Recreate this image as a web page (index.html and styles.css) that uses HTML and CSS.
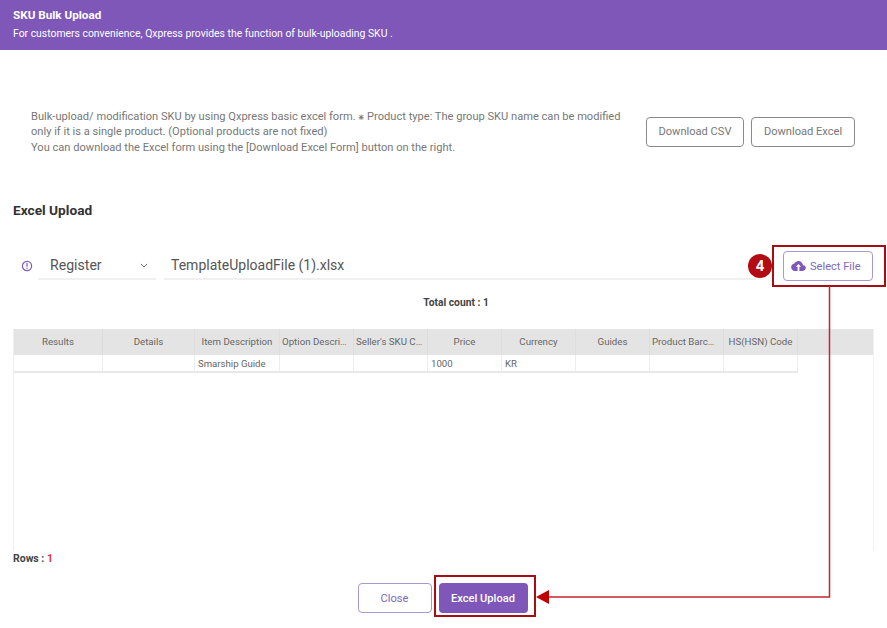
FILE: index.html
```html
<!DOCTYPE html>
<html lang="en">
<head>
<meta charset="utf-8">
<title>SKU Bulk Upload</title>
<link rel="stylesheet" href="styles.css">
</head>
<body>
<div class="page">
  <header class="banner">
    <h1 class="banner-title">SKU Bulk Upload</h1>
    <p class="banner-sub">For customers convenience, Qxpress provides the function of bulk-uploading SKU .</p>
  </header>

  <section class="intro">
    <p class="intro-text">Bulk-upload/ modification SKU by using Qxpress basic excel form. ⁕ Product type: The group SKU name can be modified only if it is a single product. (Optional products are not fixed)<br>You can download the Excel form using the [Download Excel Form] button on the right.</p>
    <div class="intro-actions">
      <button class="btn btn-grey btn-csv">Download CSV</button>
      <button class="btn btn-grey btn-excel">Download Excel</button>
    </div>
  </section>

  <h2 class="section-title">Excel Upload</h2>

  <div class="form-row">
    <svg class="info-icon" viewBox="0 0 12 12" width="12" height="12"><circle cx="6" cy="6" r="4.6" fill="none" stroke="#7e57b9" stroke-width="1.2"/><rect x="5.4" y="3" width="1.2" height="3.7" fill="#7e57b9"/><rect x="5.4" y="7.7" width="1.2" height="1.2" fill="#7e57b9"/></svg>
    <div class="select">
      <span>Register</span>
      <svg viewBox="0 0 10 6" width="8" height="5"><path d="M1 1l4 4 4-4" fill="none" stroke="#666" stroke-width="1.2"/></svg>
    </div>
    <div class="file-name">TemplateUploadFile (1).xlsx</div>
    <button class="btn btn-purple-line btn-select">
      <svg viewBox="0 0 24 18" width="15" height="11"><path d="M19.3 6.8C18.6 3 15.6.2 12 .2 9.100.2 6.600 1.800 5.300 4.200 2.300 4.600 0 7.100 0 10.200c0 3.300 2.700 6 6 6h13c2.800 0 5-2.200 5-5 0-2.600-2-4.700-4.700-4.400z" fill="#7e57b9"/><path d="M12 4.800l4.300 4.500h-2.800v6.900h-3V9.300H7.700z" fill="#fff"/></svg>
      Select File
    </button>
  </div>

  <div class="total">Total count : 1</div>

  <div class="grid">
    <div class="grid-head">
      <div class="col c1 center">Results</div>
      <div class="col c2 center">Details</div>
      <div class="col c3 center">Item Description</div>
      <div class="col c4">Option Descri…</div>
      <div class="col c4">Seller's SKU C…</div>
      <div class="col c4 center">Price</div>
      <div class="col c4 center">Currency</div>
      <div class="col c4 center">Guides</div>
      <div class="col c4">Product Barc…</div>
      <div class="col c4 center">HS(HSN) Code</div>
    </div>
    <div class="grid-row">
      <div class="col c1"></div>
      <div class="col c2"></div>
      <div class="col c3">Smarship Guide</div>
      <div class="col c4"></div>
      <div class="col c4"></div>
      <div class="col c4">1000</div>
      <div class="col c4">KR</div>
      <div class="col c4"></div>
      <div class="col c4"></div>
      <div class="col c4"></div>
    </div>
  </div>

  <div class="rows">Rows : <span class="rows-num">1</span></div>

  <div class="footer-actions">
    <button class="btn btn-purple-line btn-close">Close</button>
    <button class="btn btn-primary">Excel Upload</button>
  </div>

  <div class="mark mark-select"></div>
  <div class="badge">4</div>
  <div class="mark mark-upload"></div>
  <svg class="connector" width="887" height="628" viewBox="0 0 887 628"><path d="M829.500 286V597H548" fill="none" stroke="#c8242b" stroke-width="1.5"/><path d="M536 597l13-7v14z" fill="#c00000"/></svg>
</div>
</body>
</html>
```
FILE: styles.css
```css
* { box-sizing: border-box; }
html, body { margin: 0; padding: 0; background: #fff; }
body { font-family: Roboto, "Liberation Sans", sans-serif; color: #444; }
.page { position: relative; width: 887px; height: 628px; overflow: hidden; }

.banner { height: 50px; background: #7e57b9; color: #fff; padding: 8px 13px 0; }
.banner-title { margin: 0; font-size: 11.7px; line-height: 14px; font-weight: 700; }
.banner-sub { margin: 5px 0 0; font-size: 10.4px; line-height: 14px; font-weight: 400; }

.intro { display: flex; align-items: center; padding: 58.5px 32px 0 31px; }
.intro-text { flex: none; margin: 0; width: 600px; font-size: 11.1px; line-height: 15.5px; color: #777; }
.intro-actions { display: flex; gap: 7px; margin-left: 15px; }

.btn { height: 30px; padding: 0; border-radius: 4px; font-family: inherit; font-size: 11.1px; background: #fff; cursor: pointer; }
.btn-grey { border: 1px solid #8a8a8a; color: #777; }
.btn-csv { width: 98px; }
.btn-excel { width: 104px; }
.btn-purple-line { border: 1px solid #a897d2; color: #8068bb; }
.btn-primary { width: 89px; border: 0; background: #7e57b9; color: #fff; font-weight: 500; }

.section-title { margin: 45px 0 0 13px; font-size: 13.7px; line-height: 20px; font-weight: 700; color: #333; }

.form-row { display: flex; align-items: center; height: 30px; margin-top: 31px; padding-left: 21px; }
.info-icon { flex: none; }
.select { display: flex; align-items: center; justify-content: space-between; width: 118px; height: 28px; margin: 0 0 0 5px; padding: 0 8px 0 12px; border-bottom: 2px solid #f0f0f0; font-size: 14.1px; color: #555; }
.file-name { width: 592px; height: 28px; margin-left: 8px; padding: 3px 0 0 7px; border-bottom: 2px solid #f0f0f0; font-size: 14px; line-height: 20px; color: #555; }
.btn-select { display: flex; align-items: center; justify-content: flex-start; gap: 4px; flex: none; width: 90px; margin-left: 27px; padding-left: 7px; }

.total { margin-top: 16px; padding-left: 25px; text-align: center; font-size: 10.3px; line-height: 12px; font-weight: 700; color: #444; }

.grid { width: 861px; height: 222px; margin: 20px 0 0 13px; border-left: 1px solid #eee; border-right: 1px solid #f2f2f2; }
.grid-head { display: flex; height: 26px; background: #e4e4e4; }
.grid-row { display: flex; width: 784px; height: 18px; border-bottom: 2px solid #e8e8e8; }
.col { flex: none; padding: 0 2px; font-size: 9.7px; line-height: 25px; color: #666; white-space: nowrap; overflow: hidden; border-right: 1px solid #eee; }
.grid-head .col { border-right-color: #ddd; }
.grid-row .col { padding-left: 3px; font-size: 9.6px; line-height: 17px; }
.center { text-align: center; }
.c1 { width: 89px; }
.c2 { width: 92px; }
.c3 { width: 85px; }
.c4 { width: 74px; }

.rows { margin: 0 0 0 13px; padding-top: 1px; height: 15px; font-size: 10.5px; line-height: 14px; font-weight: 700; color: #444; }
.rows-num { color: #e0323c; }

.footer-actions { display: flex; justify-content: center; gap: 7px; margin-top: 17px; padding-right: 2px; }
.btn-close { width: 74px; }

.mark { position: absolute; border: 2px solid #a60d14; }
.mark-select { left: 772px; top: 245px; width: 114px; height: 42px; }
.mark-upload { left: 434px; top: 575px; width: 102px; height: 42px; }
.badge { position: absolute; left: 748px; top: 254px; width: 24px; height: 24px; border-radius: 50%; background: #b30c12; color: #fff; font-size: 15px; font-weight: 700; line-height: 24px; text-align: center; }
.connector { position: absolute; left: 0; top: 0; pointer-events: none; }
```
